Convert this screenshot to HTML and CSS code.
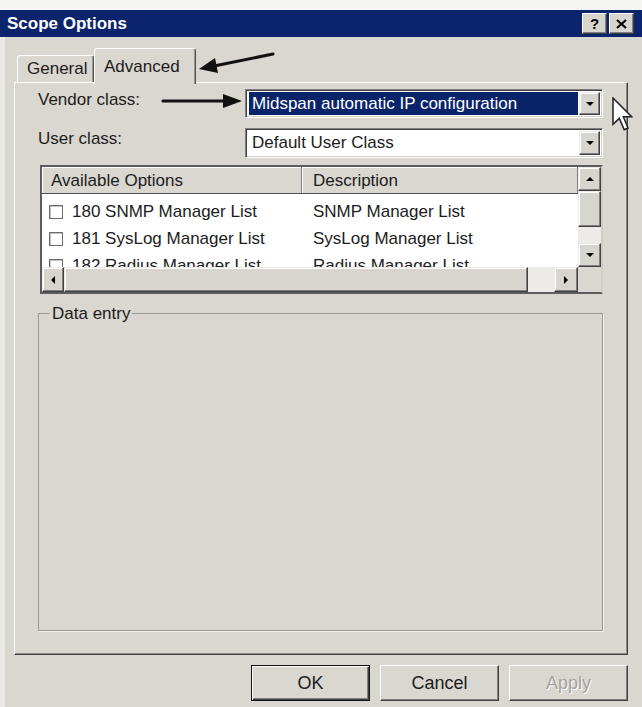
FILE: index.html
```html
<!DOCTYPE html>
<html lang="en">
<head>
<meta charset="utf-8">
<title>Scope Options</title>
<link rel="stylesheet" href="styles.css">
</head>
<body>
<div class="window">
  <div class="titlebar">
    <span class="title">Scope Options</span>
    <div class="caption-btns">
      <span class="cap-btn">?</span>
      <span class="cap-btn">
        <svg width="11" height="10" viewBox="0 0 11 10"><path d="M1 1 L10 9 M10 1 L1 9" stroke="#000" stroke-width="2.2"/></svg>
      </span>
    </div>
  </div>

  <div class="client">
    <div class="tabs">
      <div class="tab general">General</div>
      <div class="tab active">Advanced</div>
    </div>

    <div class="panel">
      <div class="field">
        <label class="field-label">Vendor class:</label>
        <div class="combo">
          <div class="combo-value selected">Midspan automatic IP configuration</div>
          <div class="combo-btn"><i class="tri down"></i></div>
        </div>
      </div>
      <div class="field second">
        <label class="field-label">User class:</label>
        <div class="combo">
          <div class="combo-value">Default User Class</div>
          <div class="combo-btn"><i class="tri down"></i></div>
        </div>
      </div>

      <div class="listview">
        <div class="lv-body">
          <div class="lv-header">
            <div class="lv-col c1">Available Options</div>
            <div class="lv-col c2">Description</div>
          </div>
          <div class="lv-rows">
            <div class="lv-row"><div class="c1"><span class="check"></span>180 SNMP Manager List</div><div class="c2">SNMP Manager List</div></div>
            <div class="lv-row"><div class="c1"><span class="check"></span>181 SysLog Manager List</div><div class="c2">SysLog Manager List</div></div>
            <div class="lv-row"><div class="c1"><span class="check"></span>182 Radius Manager List</div><div class="c2">Radius Manager List</div></div>
          </div>
        </div>
        <div class="vscroll">
          <div class="sb-btn"><i class="tri up"></i></div>
          <div class="sb-thumb v"></div>
          <div class="sb-track"></div>
          <div class="sb-btn"><i class="tri down"></i></div>
        </div>
        <div class="hscroll">
          <div class="sb-btn left-btn"><i class="tri left"></i></div>
          <div class="sb-thumb h"></div>
          <div class="sb-track"></div>
          <div class="sb-btn right-btn"><i class="tri right"></i></div>
        </div>
        <div class="sb-corner"></div>
      </div>

      <fieldset class="group">
        <legend>Data entry</legend>
      </fieldset>
    </div>

    <div class="buttons">
      <button class="btn default">OK</button>
      <button class="btn">Cancel</button>
      <button class="btn disabled">Apply</button>
    </div>
  </div>

  <!-- hand-drawn call-out arrows and the mouse pointer -->
  <svg class="annot arrow-tab" width="82" height="28" viewBox="0 0 82 28">
    <path d="M77 6 L18 18" stroke="#111" stroke-width="3" stroke-linecap="round"/>
    <polygon points="3,21 22,25 19,10" fill="#111"/>
  </svg>
  <svg class="annot arrow-vendor" width="86" height="18" viewBox="0 0 86 18">
    <path d="M3 9 L66 9" stroke="#111" stroke-width="3" stroke-linecap="round"/>
    <polygon points="82,9 63,2 63,16" fill="#111"/>
  </svg>
  <svg class="annot cursor" width="21" height="34" viewBox="0 0 12.6 20.4">
    <path d="M0.6 0.6 L0.6 16.4 L4.4 12.8 L7.3 19.6 L9.6 18.6 L6.8 11.9 L11.8 11.9 Z" fill="#fff" stroke="#222" stroke-width="0.9" stroke-linejoin="miter"/>
  </svg>
</div>
</body>
</html>
```

FILE: styles.css
```css
* {
  box-sizing: border-box;
}

html,
body {
  margin: 0;
}

body {
  width: 642px;
  height: 707px;
  overflow: hidden;
  background: #f5f5f3;
  font-family: "Liberation Sans", Arial, sans-serif;
  font-size: 17px;
  color: #1c1c1c;
}

.window {
  position: relative;
  width: 642px;
  height: 707px;
  padding-top: 10px;
}

/* title bar */
.titlebar {
  height: 27px;
  background: #0b246c;
  display: flex;
  align-items: center;
  justify-content: space-between;
  padding: 0 8px 0 7px;
}

.title {
  color: #fff;
  font-weight: bold;
  font-size: 17px;
}

.caption-btns {
  display: flex;
  gap: 2px;
}

.cap-btn {
  width: 25px;
  height: 21px;
  background: #d8d5ce;
  border: 1px solid;
  border-color: #fff #404040 #404040 #fff;
  box-shadow: inset -1px -1px 0 #808080;
  display: flex;
  align-items: center;
  justify-content: center;
  font-weight: bold;
  font-size: 15px;
  color: #000;
}

/* dialog body */
.client {
  height: 670px;
  background: #dad7d0;
  border-left: 5px solid #ebe9e5;
  padding: 11px 14px 0 9px;
}

.tabs {
  display: flex;
  align-items: flex-end;
  height: 34px;
  margin-left: 3px;
  position: relative;
  z-index: 1;
}

.tab {
  height: 27px;
  line-height: 26px;
  border: 1px solid;
  border-bottom: none;
  border-color: #fff #505050 transparent #fff;
  border-radius: 3px 3px 0 0;
  box-shadow: inset -1px 0 0 #9a9893;
  background: #dad7d0;
}

.tab.general {
  width: 77px;
  padding-left: 9px;
}

.tab.active {
  width: 102px;
  height: 36px;
  margin-bottom: -2px;
  line-height: 35px;
  padding-left: 9px;
}

.panel {
  height: 573px;
  border: 1px solid;
  border-color: #fff #404040 #404040 #fff;
  box-shadow: inset -1px -1px 0 #8c8a85;
  padding: 6px 24px 0 23px;
  display: flex;
  flex-direction: column;
}

/* label + combo rows */
.field {
  display: flex;
  height: 29px;
}

.field.second {
  margin-top: 10px;
  height: 30px;
}

.field-label {
  width: 207px;
  line-height: 22px;
}

.combo {
  flex: 1;
  display: flex;
  gap: 1px;
  background: #fff;
  border: 1px solid;
  border-color: #808080 #fff #fff #808080;
  box-shadow: inset 1px 1px 0 #404040, inset -1px -1px 0 #d4d0c8;
  padding: 2px 2px 2px 3px;
}

.combo-value {
  flex: 1;
  padding-left: 3px;
  line-height: 23px;
  white-space: nowrap;
}

.combo-value.selected {
  background: #0a246a;
  color: #fff;
}

.combo-btn,
.sb-btn,
.sb-thumb {
  background: #d8d5ce;
  border: 1px solid;
  border-color: #ecebe7 #404040 #404040 #ecebe7;
  box-shadow: inset -1px -1px 0 #808080, inset 1px 1px 0 #fff;
}

.combo-btn {
  width: 21px;
  display: flex;
  align-items: center;
  justify-content: center;
}

.tri {
  display: block;
  width: 0;
  height: 0;
}

.tri.down {
  border-left: 4px solid transparent;
  border-right: 4px solid transparent;
  border-top: 4px solid #000;
}

.tri.up {
  border-left: 4px solid transparent;
  border-right: 4px solid transparent;
  border-bottom: 4px solid #000;
}

.tri.left {
  border-top: 4px solid transparent;
  border-bottom: 4px solid transparent;
  border-right: 4px solid #000;
}

.tri.right {
  border-top: 4px solid transparent;
  border-bottom: 4px solid transparent;
  border-left: 4px solid #000;
}

/* list view */
.listview {
  margin: 7px 0 0 2px;
  height: 129px;
  display: grid;
  grid-template-columns: 1fr 23px;
  grid-template-rows: 1fr 25px;
  border: 2px solid;
  border-color: #5c5c5c #d0cdc6 #5c5c5c #5c5c5c;
  background: #fff;
}

.lv-body {
  overflow: hidden;
  min-width: 0;
}

.lv-header {
  display: flex;
  height: 27px;
  background: #dad7d0;
  border-bottom: 1px solid #505050;
}

.lv-col {
  line-height: 28px;
  box-shadow: inset -1px 0 0 #808080, inset 1px 1px 0 #fff;
  white-space: nowrap;
}

.c1 {
  width: 260px;
  padding-left: 9px;
}

.c2 {
  flex: 1;
  padding-left: 11px;
}

.lv-rows {
  padding-top: 4px;
}

.lv-row {
  display: flex;
  height: 27px;
  line-height: 27px;
  white-space: nowrap;
}

.lv-row .c1 {
  display: flex;
  align-items: center;
  padding-left: 7px;
}

.check {
  width: 14px;
  height: 14px;
  margin-right: 9px;
  border: 1px solid #6b6b6b;
  background: #fff;
  box-shadow: inset 1px 1px 0 #c4c2bd;
}

.vscroll {
  display: flex;
  flex-direction: column;
}

.vscroll .sb-btn {
  height: 24px;
}

.sb-btn {
  display: flex;
  align-items: center;
  justify-content: center;
}

.sb-thumb.v {
  height: 36px;
}

.sb-track {
  flex: 1;
  background: #ecebe7;
}

.hscroll {
  display: flex;
}

.left-btn {
  width: 22px;
}

.sb-thumb.h {
  width: 464px;
}

.right-btn {
  width: 24px;
}

.sb-corner {
  background: #dad7d0;
}

/* group box */
.group {
  margin: 10px 0 0 0;
  height: 327px;
  padding: 0;
  border: 1px solid #9b9994;
  box-shadow: 1px 1px 0 #f4f3f0;
}

.group legend {
  margin-left: 11px;
  padding: 0 2px;
  line-height: 19px;
  font-size: 17px;
}

/* dialog buttons */
.buttons {
  display: flex;
  justify-content: flex-end;
  gap: 10px;
  margin-top: 10px;
}

.btn {
  width: 119px;
  height: 36px;
  font-family: "Liberation Sans", Arial, sans-serif;
  font-size: 18px;
  color: #1c1c1c;
  background: #dad7d0;
  border: 1px solid;
  border-color: #fff #404040 #404040 #fff;
  box-shadow: inset -1px -1px 0 #808080;
  padding: 0;
}

.btn.default {
  border: 1px solid #111;
  box-shadow: inset 1px 1px 0 #fff, inset -1px -1px 0 #404040, inset -2px -2px 0 #808080;
}

.btn.disabled {
  color: #a3a19c;
  text-shadow: 1px 1px 0 #fff;
}

/* overlays */
.annot {
  position: absolute;
}

.arrow-tab {
  left: 196px;
  top: 48px;
}

.arrow-vendor {
  left: 160px;
  top: 92px;
}

.cursor {
  left: 612px;
  top: 97px;
}
```
